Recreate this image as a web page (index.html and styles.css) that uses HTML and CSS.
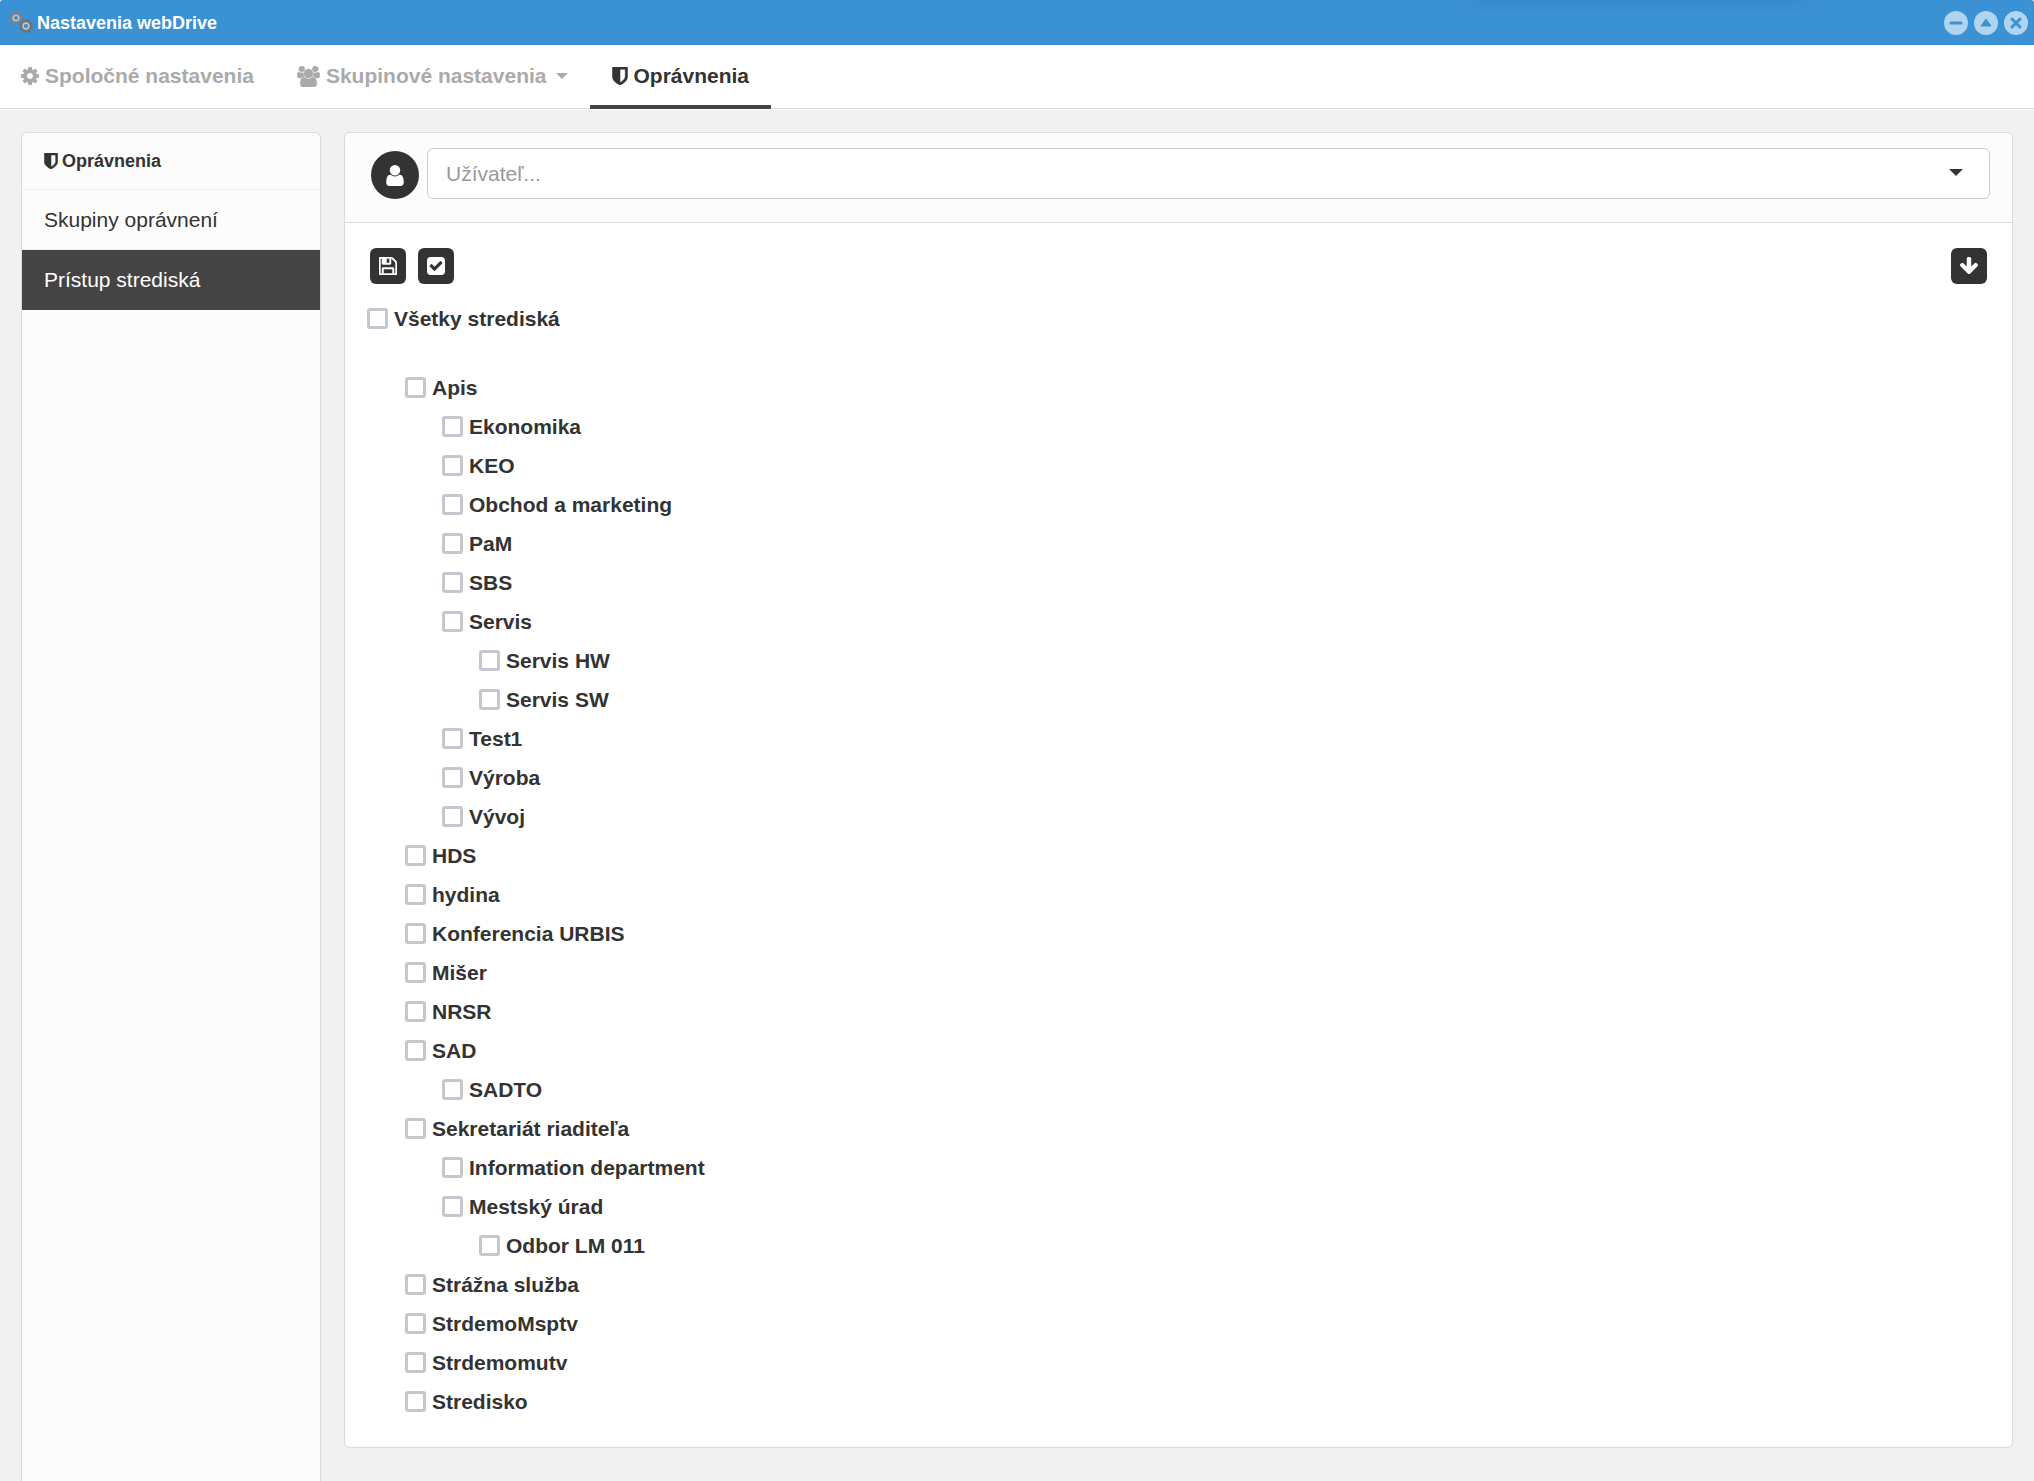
FILE: index.html
```html
<!DOCTYPE html>
<html lang="sk">
<head>
  <meta charset="UTF-8">
  <meta name="viewport" content="width=device-width, initial-scale=1.0">
  <title>Nastavenia webDrive</title>
  <link rel="stylesheet" href="styles.css">
</head>
<body>
  <svg class="sprite" aria-hidden="true">
    <symbol id="icon-cog" viewBox="128 128 1536 1536"><path d="M1152 896q0-106-75-181t-181-75-181 75-75 181 75 181 181 75 181-75 75-181zm512-109v222q0 12-8 23t-20 13l-185 28q-19 54-39 91 35 50 107 138 10 12 10 25t-9 23q-27 37-99 108t-94 71q-12 0-26-9l-138-108q-44 23-91 38-16 136-29 186-7 28-36 28h-222q-14 0-24.500-8.500t-11.500-21.500l-28-184q-49-16-90-37l-141 107q-10 9-25 9-14 0-25-11-126-114-165-168-7-10-7-23 0-12 8-23 15-21 51-66.500t54-70.500q-27-50-41-99l-183-27q-13-2-21-12.500t-8-23.500v-222q0-12 8-23t19-13l186-28q14-46 39-92-40-57-107-138-10-12-10-24 0-10 9-23 26-36 98.500-107.500t94.500-71.500q13 0 26 10l138 107q44-23 91-38 16-136 29-186 7-28 36-28h222q14 0 24.500 8.500t11.500 21.500l28 184q49 16 90 37l142-107q9-9 24-9 13 0 25 10 129 119 165 170 7 8 7 22 0 12-8 23-15 21-51 66.500t-54 70.500q26 50 41 98l183 28q13 2 21 12.500t8 23.500z"/></symbol>
    <symbol id="icon-users" viewBox="64 0 1920 1792"><path d="M657 896q-162 5-265 128h-134q-82 0-138-40.500t-56-118.500q0-353 124-353 6 0 43.500 21t97.500 42.500 119 21.500q67 0 133-23-5 37-5 66 0 139 81 256zm1071 637q0 120-73 189.500t-194 69.500h-874q-121 0-194-69.500t-73-189.500q0-53 3.500-103.500t14-109 26.500-108.500 43-97.500 62-81 85.500-53.500 111.500-20q10 0 43 21.500t73 48 107 48 135 21.500 135-21.500 107-48 73-48 43-21.500q61 0 111.500 20t85.500 53.500 62 81 43 97.500 26.500 108.500 14 109 3.500 103.500zm-1024-1277q0 106-75 181t-181 75-181-75-75-181 75-181 181-75 181 75 75 181zm704 384q0 159-112.500 271.500t-271.500 112.500-271.500-112.500-112.500-271.500 112.500-271.500 271.500-112.500 271.500 112.500 112.500 271.500zm576 225q0 78-56 118.500t-138 40.500h-134q-103-123-265-128 81-117 81-256 0-29-5-66 66 23 133 23 59 0 119-21.500t97.500-42.500 43.500-21q124 0 124 353zm-128-609q0 106-75 181t-181 75-181-75-75-181 75-181 181-75 181 75 75 181z" stroke="currentColor" stroke-width="40"/></symbol>
    <symbol id="icon-shield" viewBox="256 128 1280 1536"><path d="M1344 960v-640h-448v1137q119-63 213-137 235-184 235-360zm192-768v768q0 86-33.500 170.500t-83 150-118 127.500-126.500 103-121 77.500-89.500 49.500-42.500 20q-12 6-26 6t-26-6q-16-7-42.500-20t-89.500-49.500-121-77.500-126.500-103-118-127.500-83-150-33.500-170.500v-768q0-26 19-45t45-19h1152q26 0 45 19t19 45z" stroke="currentColor" stroke-width="50"/></symbol>
    <symbol id="icon-user" viewBox="256 128 1280 1536"><path d="M1536 1399q0 109-62.500 187t-150.500 78h-854q-88 0-150.500-78t-62.500-187q0-85 8.500-160.500t31.500-152 58.500-131 94-89 134.500-34.500q131 128 313 128t313-128q76 0 134.500 34.500t94 89 58.500 131 31.500 152 8.500 160.500zm-256-887q0 159-112.500 271.500t-271.500 112.500-271.500-112.500-112.500-271.500 112.500-271.500 271.500-112.500 271.500 112.500 112.500 271.500z"/></symbol>
    <symbol id="icon-save" viewBox="128 128 1536 1536"><path d="M512 1536h768v-384h-768v384zm896 0h128v-896q0-14-10-38.500t-20-34.500l-281-281q-10-10-34-20t-39-10v416q0 40-28 68t-68 28h-576q-40 0-68-28t-28-68v-416h-128v1280h128v-416q0-40 28-68t68-28h832q40 0 68 28t28 68v416zm-384-928v-320q0-13-9.500-22.500t-22.500-9.500h-192q-13 0-22.500 9.500t-9.500 22.500v320q0 13 9.500 22.500t22.500 9.500h192q13 0 22.500-9.500t9.500-22.500zm640 32v928q0 40-28 68t-68 28h-1344q-40 0-68-28t-28-68v-1344q0-40 28-68t68-28h928q40 0 88 20t76 48l280 280q28 28 48 76t20 88z" stroke="currentColor" stroke-width="40"/></symbol>
    <symbol id="icon-check" viewBox="128 128 1536 1536"><path d="M813 1299l614-614q19-19 19-45t-19-45l-102-102q-19-19-45-19t-45 19l-467 467-211-211q-19-19-45-19t-45 19l-102 102q-19 19-19 45t19 45l358 358q19 19 45 19t45-19zm851-883v960q0 119-84.500 203.500t-203.500 84.500h-960q-119 0-203.500-84.500t-84.500-203.500v-960q0-119 84.500-203.500t203.500-84.500h960q119 0 203.500 84.500t84.500 203.500z"/></symbol>
    <symbol id="icon-down" viewBox="116 128 1560 1560"><path d="M1675 832q0 53-37 90l-651 652q-39 37-91 37-53 0-90-37l-651-652q-38-36-38-90 0-53 38-91l74-75q39-37 91-37 53 0 90 37l294 294v-704q0-52 38-90t90-38h128q52 0 90 38t38 90v704l294-294q37-37 90-37 52 0 91 37l75 75q37 39 37 91z"/></symbol>
  </svg>

  <header class="titlebar">
    <svg class="gears" viewBox="0 0 24 24" aria-hidden="true">
      <g fill="none" stroke="#7b8187">
        <circle cx="7" cy="7" r="5.500" stroke-width="2.600" stroke-dasharray="2.300 2.020"/>
        <circle cx="7" cy="7" r="3.500" stroke-width="3.600"/>
        <circle cx="7" cy="7" r="2.800" stroke="#bfc4c9" stroke-width="1.600"/>
      </g>
      <g fill="none" stroke="#6c7278">
        <circle cx="17" cy="15" r="5.800" stroke-width="2.800" stroke-dasharray="2.400 2.156"/>
        <circle cx="17" cy="15" r="3.700" stroke-width="4"/>
        <circle cx="17" cy="15" r="2.900" stroke="#bfc4c9" stroke-width="1.600"/>
      </g>
    </svg>
    <h1>Nastavenia webDrive</h1>
    <div class="window-buttons">
      <button type="button" aria-label="Minimalizovať">
        <svg viewBox="0 0 24 24"><path d="M7 12h10" stroke-width="3" stroke-linecap="round"/></svg>
      </button>
      <button type="button" aria-label="Maximalizovať">
        <svg viewBox="0 0 24 24"><path d="M12 8l5 7H7z" fill="#3a91d4" stroke-width="1"/></svg>
      </button>
      <button type="button" aria-label="Zavrieť">
        <svg viewBox="0 0 24 24"><path d="M8 8l8 8M16 8l-8 8" stroke-width="3" stroke-linecap="round"/></svg>
      </button>
    </div>
  </header>

  <nav class="tabs">
    <a href="#spolocne"><svg class="icon-cog"><use href="#icon-cog"/></svg>Spoločné nastavenia</a>
    <a href="#skupinove"><svg class="icon-users"><use href="#icon-users"/></svg>Skupinové nastavenia<span class="caret"></span></a>
    <a href="#opravnenia" class="active"><svg class="icon-shield"><use href="#icon-shield"/></svg>Oprávnenia</a>
  </nav>

  <div class="content">
    <aside class="sidebar">
      <h2><svg><use href="#icon-shield"/></svg>Oprávnenia</h2>
      <a href="#skupiny">Skupiny oprávnení</a>
      <a href="#pristup" class="active">Prístup strediská</a>
    </aside>

    <main class="panel">
      <div class="panel-head">
        <span class="avatar"><svg><use href="#icon-user"/></svg></span>
        <div class="user-select">
          <select aria-label="Užívateľ">
            <option>Užívateľ...</option>
          </select>
          <span class="arrow"></span>
        </div>
      </div>

      <div class="toolbar">
        <button type="button" aria-label="Uložiť"><svg><use href="#icon-save"/></svg></button>
        <button type="button" aria-label="Označiť všetko"><svg><use href="#icon-check"/></svg></button>
        <button type="button" class="right" aria-label="Rozbaliť"><svg><use href="#icon-down"/></svg></button>
      </div>

      <div class="tree">
        <label><input type="checkbox">Všetky strediská</label>
        <ul class="root">
          <li>
            <label><input type="checkbox">Apis</label>
            <ul>
              <li><label><input type="checkbox">Ekonomika</label></li>
              <li><label><input type="checkbox">KEO</label></li>
              <li><label><input type="checkbox">Obchod a marketing</label></li>
              <li><label><input type="checkbox">PaM</label></li>
              <li><label><input type="checkbox">SBS</label></li>
              <li>
                <label><input type="checkbox">Servis</label>
                <ul>
                  <li><label><input type="checkbox">Servis HW</label></li>
                  <li><label><input type="checkbox">Servis SW</label></li>
                </ul>
              </li>
              <li><label><input type="checkbox">Test1</label></li>
              <li><label><input type="checkbox">Výroba</label></li>
              <li><label><input type="checkbox">Vývoj</label></li>
            </ul>
          </li>
          <li><label><input type="checkbox">HDS</label></li>
          <li><label><input type="checkbox">hydina</label></li>
          <li><label><input type="checkbox">Konferencia URBIS</label></li>
          <li><label><input type="checkbox">Mišer</label></li>
          <li><label><input type="checkbox">NRSR</label></li>
          <li>
            <label><input type="checkbox">SAD</label>
            <ul>
              <li><label><input type="checkbox">SADTO</label></li>
            </ul>
          </li>
          <li>
            <label><input type="checkbox">Sekretariát riaditeľa</label>
            <ul>
              <li><label><input type="checkbox">Information department</label></li>
              <li>
                <label><input type="checkbox">Mestský úrad</label>
                <ul>
                  <li><label><input type="checkbox">Odbor LM 011</label></li>
                </ul>
              </li>
            </ul>
          </li>
          <li><label><input type="checkbox">Strážna služba</label></li>
          <li><label><input type="checkbox">StrdemoMsptv</label></li>
          <li><label><input type="checkbox">Strdemomutv</label></li>
          <li><label><input type="checkbox">Stredisko</label></li>
        </ul>
      </div>
    </main>
  </div>
</body>
</html>
```

FILE: styles.css
```css
:root {
  --blue: #3a91d4;
  --dark: #333;
  --active: #444;
  --border: #dadada;
  --muted: #aaa;
}

* {
  margin: 0;
  padding: 0;
  box-sizing: border-box;
}

body {
  font-family: "Liberation Sans", Arial, sans-serif;
  font-size: 21px;
  line-height: 24px;
  color: var(--dark);
  background-color: #f1f1f1;
  min-height: 100vh;
  display: flex;
  flex-direction: column;
}

svg {
  fill: currentColor;
  flex-shrink: 0;
}

a {
  color: inherit;
  text-decoration: none;
}

button {
  border: none;
  cursor: pointer;
  display: flex;
  align-items: center;
  justify-content: center;
}

.sprite {
  display: none;
}

/* Title bar */
.titlebar {
  position: relative;
  display: flex;
  align-items: center;
  height: 45px;
  padding: 0 6px 0 9px;
  color: white;
  background-color: var(--blue);
  border-radius: 3px 3px 0 0;
  overflow: hidden;
}

/* soft shadow falling on the bar from above */
.titlebar::before {
  content: "";
  position: absolute;
  top: -10px;
  right: 232px;
  width: 330px;
  height: 10px;
  box-shadow: 0 0 16px rgba(0, 0, 0, 0.1);
}

.titlebar h1 {
  font-size: 18px;
  margin-left: 4px;
}

.gears {
  width: 24px;
  height: 24px;
}

.window-buttons {
  display: flex;
  gap: 6px;
  margin-left: auto;
}

.window-buttons button {
  width: 24px;
  height: 24px;
  border-radius: 50%;
  background-color: #b0d3ee;
}

.window-buttons svg {
  width: 24px;
  height: 24px;
  fill: none;
  stroke: var(--blue);
}

/* Tabs */
.tabs {
  display: flex;
  height: 64px;
  background-color: white;
  border-bottom: 1px solid var(--border);
  box-shadow: 0 1px 0 white;
}

.tabs a {
  display: flex;
  align-items: center;
  gap: 6px;
  margin-bottom: -1px;
  padding: 0 22px 0 21px;
  font-weight: bold;
  color: var(--muted);
  border-bottom: 4px solid transparent;
  border-top: 2px solid transparent;
}

.tabs a.active {
  padding: 0 22px;
  color: var(--dark);
  border-bottom-color: var(--active);
}

.icon-cog {
  width: 18px;
  height: 18px;
}

.icon-users {
  width: 23px;
  height: 21px;
}

.icon-shield {
  width: 16px;
  height: 18px;
}

.caret {
  margin-left: 3px;
  border-top: 6px solid;
  border-left: 6px solid transparent;
  border-right: 6px solid transparent;
}

/* Layout */
.content {
  flex: 1;
  display: flex;
  gap: 23px;
  padding: 23px 21px 0;
}

.sidebar {
  width: 300px;
  flex-shrink: 0;
  background-color: #fcfcfc;
  border: 1px solid var(--border);
  border-bottom: none;
  border-radius: 6px 6px 0 0;
}

.sidebar h2 {
  display: flex;
  align-items: center;
  gap: 4px;
  height: 57px;
  padding: 0 22px;
  font-size: 18px;
  border-bottom: 1px solid #eee;
}

.sidebar h2 svg {
  width: 14px;
  height: 16px;
}

.sidebar a {
  display: flex;
  align-items: center;
  height: 60px;
  padding: 0 22px;
  border-bottom: 1px solid #eee;
}

.sidebar a.active {
  color: white;
  background-color: var(--active);
  border-bottom-color: var(--active);
}

.panel {
  flex: 1;
  align-self: flex-start;
  margin-bottom: 33px;
  background-color: white;
  border: 1px solid var(--border);
  border-radius: 6px;
}

.panel-head {
  display: flex;
  align-items: flex-end;
  gap: 8px;
  padding: 15px 22px 23px 26px;
  background-color: #fcfcfc;
  border-bottom: 1px solid var(--border);
  border-radius: 6px 6px 0 0;
}

.avatar {
  display: flex;
  align-items: center;
  justify-content: center;
  width: 48px;
  height: 48px;
  color: white;
  background-color: var(--dark);
  border-radius: 50%;
}

.avatar svg {
  width: 20px;
  height: 21px;
}

.user-select {
  position: relative;
  flex: 1;
}

.user-select select {
  appearance: none;
  display: block;
  width: 100%;
  height: 51px;
  padding: 0 48px 0 18px;
  font: inherit;
  color: #999;
  background-color: white;
  border: 1px solid #ccc;
  border-radius: 6px;
}

.user-select .arrow {
  position: absolute;
  top: 21px;
  right: 27px;
  border-top: 7px solid var(--dark);
  border-left: 7px solid transparent;
  border-right: 7px solid transparent;
  pointer-events: none;
}

.toolbar {
  display: flex;
  gap: 12px;
  padding: 25px 25px 15px;
}

.toolbar button {
  width: 36px;
  height: 36px;
  color: white;
  background-color: var(--dark);
  border-radius: 6px;
}

.toolbar .right {
  margin-left: auto;
}

.toolbar svg {
  width: 18px;
  height: 18px;
}

/* Tree of centres */
.tree {
  padding: 0 22px 26px;
}

.tree ul {
  list-style: none;
  padding-left: 37px;
}

.tree .root {
  margin-top: 30px;
  padding-left: 38px;
}

.tree label {
  display: flex;
  align-items: center;
  gap: 6px;
  height: 39px;
  font-weight: bold;
}

.tree input {
  appearance: none;
  width: 21px;
  height: 21px;
  background-color: white;
  border: 3px solid #c6c6ce;
  border-radius: 3px;
}

.tree input:checked {
  background-color: var(--dark);
}
```
